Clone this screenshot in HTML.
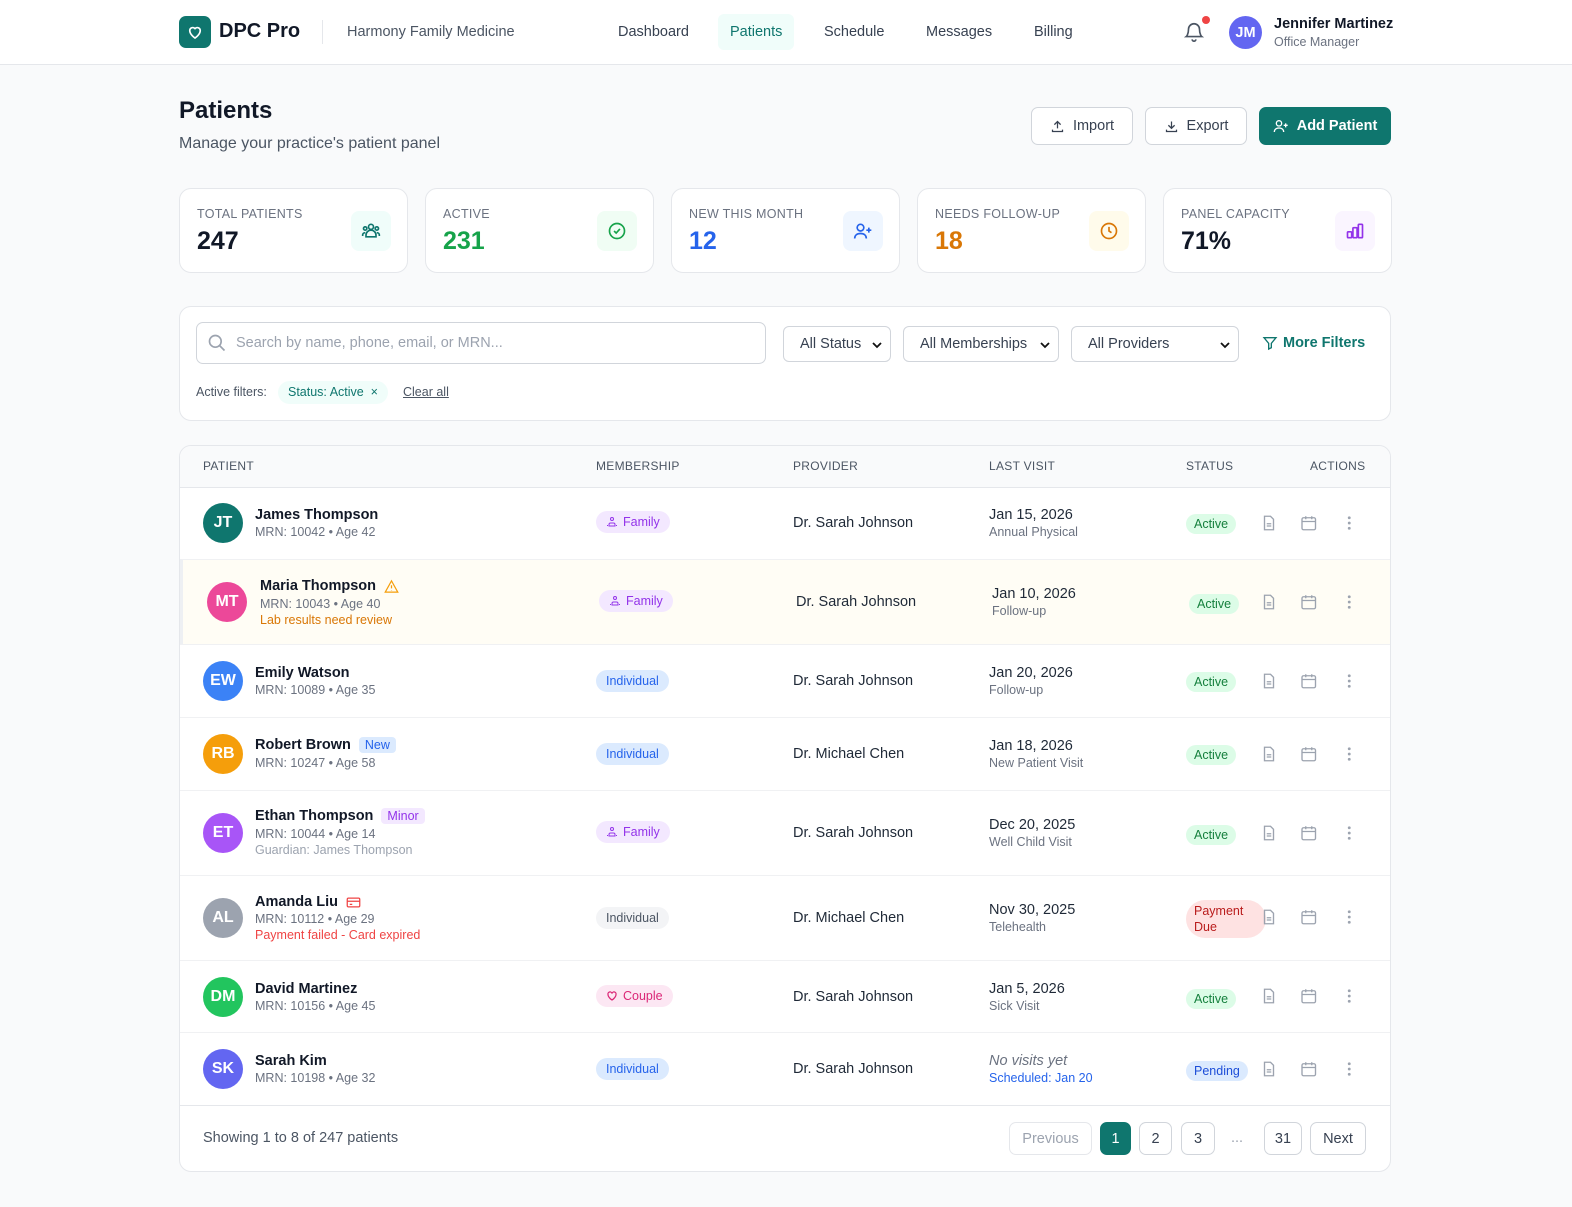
<!DOCTYPE html>
<html><head><meta charset="utf-8">
<style>
*{box-sizing:border-box;margin:0;padding:0}
body{width:1572px;height:1207px;background:#f9fafb;font-family:"Liberation Sans",sans-serif;color:#111827;position:relative;overflow:hidden}
.abs{position:absolute}
.hdr{position:absolute;left:0;top:0;width:1572px;height:65px;background:#fff;border-bottom:1px solid #e5e7eb}
.logo{left:179px;top:16px;width:32px;height:32px;border-radius:7px;background:#0f766e;display:flex;align-items:center;justify-content:center}
.nav{top:14px;height:36px;line-height:36px;font-size:14.5px;color:#374151;padding:0 12px;border-radius:6px}
.card{position:absolute;background:#fff;border:1px solid #e5e7eb;border-radius:12px}
.stat .lbl{position:absolute;left:17px;top:18px;font-size:12.5px;color:#6b7280;letter-spacing:.3px}
.stat .val{position:absolute;left:17px;top:38px;font-size:25px;font-weight:bold}
.stat .ic{position:absolute;right:16px;top:22px;width:40px;height:40px;border-radius:8px;display:flex;align-items:center;justify-content:center}
.btn{position:absolute;top:107px;height:38px;border:1px solid #d1d5db;border-radius:7px;background:#fff;font-size:14.5px;display:flex;align-items:center;justify-content:center;gap:8px;color:#374151}
.sel{position:absolute;top:326px;height:36px;border:1px solid #d1d5db;border-radius:6px;background:#fff;font-size:14.5px;color:#374151;padding-left:16px;line-height:34px}
.sel svg{position:absolute;right:8px;top:13px}
.th{position:absolute;top:459px;font-size:12px;color:#4b5563;letter-spacing:.3px}
.row{position:absolute;left:180px;width:1210px;border-top:1px solid #f0f1f3}
.row>*{position:absolute}
.av{left:23px;width:40px;height:40px;border-radius:50%;color:#fff;font-size:16px;font-weight:bold;display:flex;align-items:center;justify-content:center}
.nm{left:75px;font-size:14.5px;font-weight:bold;color:#111827;display:flex;align-items:center;gap:8px;white-space:nowrap}
.sub{left:75px;font-size:12.5px;color:#6b7280;white-space:nowrap}
.pill{height:22px;line-height:22px;border-radius:11px;padding:0 10px;font-size:12.5px;display:flex;align-items:center;gap:5px}
.fam{background:#f3e8ff;color:#9333ea}
.ind{background:#dbeafe;color:#2563eb}
.prov{left:613px;font-size:14.5px;color:#1f2937}
.lv{left:809px;font-size:14.5px;color:#1f2937}
.lvs{left:809px;font-size:12.5px;color:#6b7280}
.st{left:1006px;height:20px;line-height:20px;padding:0 8px;border-radius:10px;font-size:12.5px;background:#dcfce7;color:#15803d}
.tag{font-size:12.5px;font-weight:normal;padding:1px 6px;border-radius:4px}
.pg{position:absolute;top:1122px;height:33px;border:1px solid #d1d5db;border-radius:7px;background:#fff;font-size:14.5px;display:flex;align-items:center;justify-content:center;color:#374151}
</style></head><body>
<svg width="0" height="0" style="position:absolute"><defs>
<g id="doc" fill="none" stroke="#9ca3af" stroke-width="1.8"><path d="M6 3h8l4 4v14H6z"/><path d="M9 13h6M9 16h6"/></g>
<g id="cal" fill="none" stroke="#9ca3af" stroke-width="1.8"><rect x="3" y="5" width="18" height="16" rx="2"/><path d="M3 10h18M8 3v4M16 3v4"/></g>
<g id="dots" fill="#9ca3af"><circle cx="12" cy="5" r="1.9"/><circle cx="12" cy="12" r="1.9"/><circle cx="12" cy="19" r="1.9"/></g>
<g id="famic" fill="none" stroke="#9333ea" stroke-width="2"><circle cx="12" cy="6" r="3"/><path d="M6 20v-3a3 3 0 0 1 3-3h6a3 3 0 0 1 3 3v3zM3 20v-2M21 20v-2"/></g>
</defs></svg>
<div class="hdr"></div>
<div class="abs logo"><svg width="18" height="18" viewBox="0 0 24 24" fill="none" stroke="#fff" stroke-width="2.2"><path d="M12 20s-7-4.5-7-10a4 4 0 0 1 7-2.5A4 4 0 0 1 19 10c0 5.5-7 10-7 10z"/></svg></div>
<div class="abs" style="left:219px;top:20px;font-size:20px;font-weight:bold">DPC Pro</div>
<div class="abs" style="left:322px;top:20px;width:1px;height:24px;background:#e5e7eb"></div>
<div class="abs" style="left:347px;top:24px;font-size:14.5px;color:#4b5563">Harmony Family Medicine</div>
<div class="abs nav" style="left:606px">Dashboard</div>
<div class="abs nav" style="left:718px;background:#f0fdfa;color:#0f766e">Patients</div>
<div class="abs nav" style="left:812px">Schedule</div>
<div class="abs nav" style="left:914px">Messages</div>
<div class="abs nav" style="left:1022px">Billing</div>
<svg class="abs" style="left:1183px;top:21px" width="22" height="22" viewBox="0 0 24 24" fill="none" stroke="#4b5563" stroke-width="1.8"><path d="M6 9a6 6 0 0 1 12 0c0 6 2.5 8 2.5 8h-17S6 15 6 9z"/><path d="M10 20a2 2 0 0 0 4 0"/></svg>
<div class="abs" style="left:1202px;top:16px;width:8px;height:8px;border-radius:50%;background:#ef4444"></div>
<div class="abs" style="left:1229px;top:16px;width:33px;height:33px;border-radius:50%;background:#6366f1;color:#fff;font-weight:bold;font-size:14.5px;display:flex;align-items:center;justify-content:center">JM</div>
<div class="abs" style="left:1274px;top:16px;font-size:14.5px;font-weight:bold">Jennifer Martinez</div>
<div class="abs" style="left:1274px;top:35px;font-size:12.5px;color:#6b7280">Office Manager</div>

<div class="abs" style="left:179px;top:97px;font-size:24px;font-weight:bold">Patients</div>
<div class="abs" style="left:179px;top:135px;font-size:16px;color:#4b5563">Manage your practice's patient panel</div>
<div class="btn" style="left:1031px;width:102px"><svg width="15" height="15" viewBox="0 0 24 24" fill="none" stroke="#374151" stroke-width="2"><path d="M12 15V4M7 9l5-5 5 5M4 17v3h16v-3"/></svg>Import</div>
<div class="btn" style="left:1145px;width:102px"><svg width="15" height="15" viewBox="0 0 24 24" fill="none" stroke="#374151" stroke-width="2"><path d="M12 4v11M7 10l5 5 5-5M4 17v3h16v-3"/></svg>Export</div>
<div class="btn" style="left:1259px;width:132px;background:#0f766e;border-color:#0f766e;color:#fff;font-weight:bold"><svg width="16" height="16" viewBox="0 0 24 24" fill="none" stroke="#fff" stroke-width="2"><circle cx="9" cy="8" r="4"/><path d="M2 21c0-4 3-6 7-6s7 2 7 6M19 8v6M16 11h6"/></svg>Add Patient</div>

<div class="card stat" style="left:179px;top:188px;width:229px;height:85px"><div class="lbl">TOTAL PATIENTS</div><div class="val">247</div><div class="ic" style="background:#f0fdfa"><svg width="20" height="20" viewBox="0 0 24 24" fill="none" stroke="#0f766e" stroke-width="2"><circle cx="12" cy="7" r="3"/><circle cx="5" cy="9" r="2"/><circle cx="19" cy="9" r="2"/><path d="M6 19v-2a6 6 0 0 1 12 0v2zM2 18v-1a3 3 0 0 1 3-3M22 18v-1a3 3 0 0 0-3-3"/></svg></div></div>
<div class="card stat" style="left:425px;top:188px;width:229px;height:85px"><div class="lbl">ACTIVE</div><div class="val" style="color:#16a34a">231</div><div class="ic" style="background:#f0fdf4"><svg width="20" height="20" viewBox="0 0 24 24" fill="none" stroke="#16a34a" stroke-width="2"><circle cx="12" cy="12" r="9"/><path d="M8.5 12l2.5 2.5 4.5-5"/></svg></div></div>
<div class="card stat" style="left:671px;top:188px;width:229px;height:85px"><div class="lbl">NEW THIS MONTH</div><div class="val" style="color:#2563eb">12</div><div class="ic" style="background:#eff6ff"><svg width="20" height="20" viewBox="0 0 24 24" fill="none" stroke="#2563eb" stroke-width="2"><circle cx="9" cy="8" r="4"/><path d="M2 21c0-4 3-6 7-6s7 2 7 6M19 8v6M16 11h6"/></svg></div></div>
<div class="card stat" style="left:917px;top:188px;width:229px;height:85px"><div class="lbl">NEEDS FOLLOW-UP</div><div class="val" style="color:#d97706">18</div><div class="ic" style="background:#fffbeb"><svg width="20" height="20" viewBox="0 0 24 24" fill="none" stroke="#d97706" stroke-width="2"><circle cx="12" cy="12" r="9"/><path d="M12 7v5l3 2"/></svg></div></div>
<div class="card stat" style="left:1163px;top:188px;width:229px;height:85px"><div class="lbl">PANEL CAPACITY</div><div class="val">71%</div><div class="ic" style="background:#faf5ff"><svg width="20" height="20" viewBox="0 0 24 24" fill="none" stroke="#9333ea" stroke-width="2"><rect x="3" y="13" width="5" height="7" rx="1"/><rect x="9.5" y="8" width="5" height="12" rx="1"/><rect x="16" y="4" width="5" height="16" rx="1"/></svg></div></div>

<div class="card" style="left:179px;top:306px;width:1212px;height:115px"></div>
<div class="abs" style="left:196px;top:322px;width:570px;height:42px;border:1px solid #d1d5db;border-radius:7px;background:#fff"></div>
<svg class="abs" style="left:207px;top:333px" width="20" height="20" viewBox="0 0 24 24" fill="none" stroke="#9ca3af" stroke-width="2"><circle cx="10" cy="10" r="7"/><path d="M15 15l6 6"/></svg>
<div class="abs" style="left:236px;top:335px;font-size:14.5px;color:#9ca3af">Search by name, phone, email, or MRN...</div>
<div class="sel" style="left:783px;width:108px">All Status<svg width="10" height="10" viewBox="0 0 10 10" fill="none" stroke="#111" stroke-width="1.8"><path d="M1 3l4 4 4-4"/></svg></div>
<div class="sel" style="left:903px;width:156px">All Memberships<svg width="10" height="10" viewBox="0 0 10 10" fill="none" stroke="#111" stroke-width="1.8"><path d="M1 3l4 4 4-4"/></svg></div>
<div class="sel" style="left:1071px;width:168px">All Providers<svg width="10" height="10" viewBox="0 0 10 10" fill="none" stroke="#111" stroke-width="1.8"><path d="M1 3l4 4 4-4"/></svg></div>
<svg class="abs" style="left:1262px;top:335px" width="16" height="16" viewBox="0 0 24 24" fill="none" stroke="#0f766e" stroke-width="2"><path d="M3 4h18l-7 8.5V19l-4 2v-8.5z"/></svg>
<div class="abs" style="left:1283px;top:335px;font-size:14.5px;font-weight:bold;color:#0f766e">More Filters</div>
<div class="abs" style="left:196px;top:385px;font-size:12.5px;color:#4b5563">Active filters:</div>
<div class="abs" style="left:278px;top:381px;height:23px;line-height:23px;padding:0 10px;border-radius:12px;background:#f0fdfa;color:#0f766e;font-size:12.5px">Status: Active &nbsp;×</div>
<div class="abs" style="left:403px;top:385px;font-size:12.5px;color:#4b5563;text-decoration:underline">Clear all</div>

<div class="card" style="left:179px;top:445px;width:1212px;height:727px;overflow:hidden"><div style="height:42px;background:#f9fafb;border-bottom:1px solid #e5e7eb"></div></div>
<div class="th" style="left:203px">PATIENT</div>
<div class="th" style="left:596px">MEMBERSHIP</div>
<div class="th" style="left:793px">PROVIDER</div>
<div class="th" style="left:989px">LAST VISIT</div>
<div class="th" style="left:1186px">STATUS</div>
<div class="th" style="left:1310px">ACTIONS</div>

<div class="row" style="top:487px;height:72px;border-top:none">
 <div class="av" style="top:16px;background:#0f766e">JT</div>
 <div class="nm" style="top:20px">James Thompson</div>
 <div class="sub" style="top:38px">MRN: 10042 • Age 42</div>
 <div class="pill fam" style="left:416px;top:24px"><svg width="12" height="12" viewBox="0 0 24 24"><use href="#famic"/></svg>Family</div>
 <div class="prov" style="top:28px">Dr. Sarah Johnson</div>
 <div class="lv" style="top:20px">Jan 15, 2026</div><div class="lvs" style="top:38px">Annual Physical</div>
 <div class="st" style="top:27px">Active</div>
</div>
<div class="row" style="top:559px;height:85px;background:#fffdf5;border-left:3px solid #eef0f3">
 <div class="av" style="top:22px;left:24px;background:#ec4899">MT</div>
 <div class="nm" style="top:18px;left:77px">Maria Thompson <svg width="15" height="15" viewBox="0 0 24 24" fill="none" stroke="#f59e0b" stroke-width="2"><path d="M12 3l10 18H2zM12 10v5M12 18v.5"/></svg></div>
 <div class="sub" style="top:37px;left:77px">MRN: 10043 • Age 40</div>
 <div class="sub" style="top:53px;left:77px;color:#d97706">Lab results need review</div>
 <div class="pill fam" style="left:416px;top:30px"><svg width="12" height="12" viewBox="0 0 24 24"><use href="#famic"/></svg>Family</div>
 <div class="prov" style="top:34px">Dr. Sarah Johnson</div>
 <div class="lv" style="top:26px">Jan 10, 2026</div><div class="lvs" style="top:44px">Follow-up</div>
 <div class="st" style="top:34px">Active</div>
</div>
<div class="row" style="top:644px;height:73px">
 <div class="av" style="top:16px;background:#3b82f6">EW</div>
 <div class="nm" style="top:20px">Emily Watson</div>
 <div class="sub" style="top:38px">MRN: 10089 • Age 35</div>
 <div class="pill ind" style="left:416px;top:25px">Individual</div>
 <div class="prov" style="top:28px">Dr. Sarah Johnson</div>
 <div class="lv" style="top:20px">Jan 20, 2026</div><div class="lvs" style="top:38px">Follow-up</div>
 <div class="st" style="top:27px">Active</div>
</div>
<div class="row" style="top:717px;height:73px">
 <div class="av" style="top:16px;background:#f59e0b">RB</div>
 <div class="nm" style="top:19px">Robert Brown <span class="tag" style="background:#dbeafe;color:#2563eb">New</span></div>
 <div class="sub" style="top:38px">MRN: 10247 • Age 58</div>
 <div class="pill ind" style="left:416px;top:25px">Individual</div>
 <div class="prov" style="top:28px">Dr. Michael Chen</div>
 <div class="lv" style="top:20px">Jan 18, 2026</div><div class="lvs" style="top:38px">New Patient Visit</div>
 <div class="st" style="top:27px">Active</div>
</div>
<div class="row" style="top:790px;height:85px">
 <div class="av" style="top:22px;background:#a855f7">ET</div>
 <div class="nm" style="top:17px">Ethan Thompson <span class="tag" style="background:#f3e8ff;color:#9333ea">Minor</span></div>
 <div class="sub" style="top:36px">MRN: 10044 • Age 14</div>
 <div class="sub" style="top:52px;color:#9ca3af">Guardian: James Thompson</div>
 <div class="pill fam" style="left:416px;top:30px"><svg width="12" height="12" viewBox="0 0 24 24"><use href="#famic"/></svg>Family</div>
 <div class="prov" style="top:34px">Dr. Sarah Johnson</div>
 <div class="lv" style="top:26px">Dec 20, 2025</div><div class="lvs" style="top:44px">Well Child Visit</div>
 <div class="st" style="top:34px">Active</div>
</div>
<div class="row" style="top:875px;height:85px">
 <div class="av" style="top:22px;background:#9ca3af">AL</div>
 <div class="nm" style="top:18px">Amanda Liu <svg width="15" height="13" viewBox="0 0 24 20" fill="none" stroke="#ef4444" stroke-width="2"><rect x="2" y="3" width="20" height="14" rx="2"/><path d="M2 8h20M6 13h4"/></svg></div>
 <div class="sub" style="top:36px">MRN: 10112 • Age 29</div>
 <div class="sub" style="top:52px;color:#ef4444">Payment failed - Card expired</div>
 <div class="pill" style="left:416px;top:31px;background:#f3f4f6;color:#4b5563">Individual</div>
 <div class="prov" style="top:34px">Dr. Michael Chen</div>
 <div class="lv" style="top:26px">Nov 30, 2025</div><div class="lvs" style="top:44px">Telehealth</div>
 <div class="st" style="top:24px;height:38px;line-height:16px;padding:3px 8px;border-radius:19px;width:80px;background:#fee2e2;color:#b91c1c">Payment<br>Due</div>
</div>
<div class="row" style="top:960px;height:72px">
 <div class="av" style="top:16px;background:#22c55e">DM</div>
 <div class="nm" style="top:20px">David Martinez</div>
 <div class="sub" style="top:38px">MRN: 10156 • Age 45</div>
 <div class="pill" style="left:416px;top:24px;background:#fce7f3;color:#db2777"><svg width="12" height="12" viewBox="0 0 24 24" fill="none" stroke="#db2777" stroke-width="2.5"><path d="M12 20s-8-5-8-11a4 4 0 0 1 8-2 4 4 0 0 1 8 2c0 6-8 11-8 11z"/></svg>Couple</div>
 <div class="prov" style="top:28px">Dr. Sarah Johnson</div>
 <div class="lv" style="top:20px">Jan 5, 2026</div><div class="lvs" style="top:38px">Sick Visit</div>
 <div class="st" style="top:28px">Active</div>
</div>
<div class="row" style="top:1032px;height:73px">
 <div class="av" style="top:16px;background:#6366f1">SK</div>
 <div class="nm" style="top:20px">Sarah Kim</div>
 <div class="sub" style="top:38px">MRN: 10198 • Age 32</div>
 <div class="pill ind" style="left:416px;top:25px">Individual</div>
 <div class="prov" style="top:28px">Dr. Sarah Johnson</div>
 <div class="lv" style="top:20px;font-style:italic;color:#6b7280">No visits yet</div><div class="lvs" style="top:38px;color:#2563eb">Scheduled: Jan 20</div>
 <div class="st" style="top:28px;background:#dbeafe;color:#1d4ed8">Pending</div>
</div>

<svg class="abs" style="left:0;top:0" width="1572" height="1207">
<g transform="translate(1260,514) scale(.75)"><use href="#doc"/><use href="#cal" x="53"/><use href="#dots" x="107"/></g>
<g transform="translate(1260,593) scale(.75)"><use href="#doc"/><use href="#cal" x="53"/><use href="#dots" x="107"/></g>
<g transform="translate(1260,672) scale(.75)"><use href="#doc"/><use href="#cal" x="53"/><use href="#dots" x="107"/></g>
<g transform="translate(1260,745) scale(.75)"><use href="#doc"/><use href="#cal" x="53"/><use href="#dots" x="107"/></g>
<g transform="translate(1260,824) scale(.75)"><use href="#doc"/><use href="#cal" x="53"/><use href="#dots" x="107"/></g>
<g transform="translate(1260,908) scale(.75)"><use href="#doc"/><use href="#cal" x="53"/><use href="#dots" x="107"/></g>
<g transform="translate(1260,987) scale(.75)"><use href="#doc"/><use href="#cal" x="53"/><use href="#dots" x="107"/></g>
<g transform="translate(1260,1060) scale(.75)"><use href="#doc"/><use href="#cal" x="53"/><use href="#dots" x="107"/></g>
</svg>

<div class="abs" style="left:180px;top:1105px;width:1210px;border-top:1px solid #e5e7eb"></div>
<div class="abs" style="left:203px;top:1130px;font-size:14.5px;color:#4b5563">Showing 1 to 8 of 247 patients</div>
<div class="pg" style="left:1009px;width:83px;color:#9ca3af;border-color:#e5e7eb">Previous</div>
<div class="pg" style="left:1100px;width:31px;background:#0f766e;border-color:#0f766e;color:#fff">1</div>
<div class="pg" style="left:1139px;width:33px">2</div>
<div class="pg" style="left:1181px;width:34px">3</div>
<div class="abs" style="left:1231px;top:1130px;font-size:14.5px;color:#9ca3af">...</div>
<div class="pg" style="left:1264px;width:38px">31</div>
<div class="pg" style="left:1310px;width:56px">Next</div>
</body></html>
